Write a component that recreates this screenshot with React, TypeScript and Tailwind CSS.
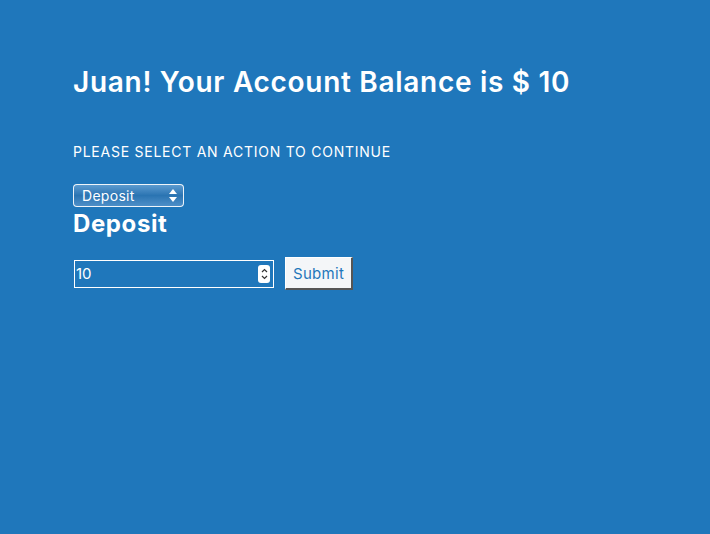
const App = () => {
  return (
    <div
      className="w-[710px] h-[534px] bg-[#1f77bb] text-white px-[73px] pt-[64px]"
      style={{ fontFamily: "Inter, 'Noto Sans', sans-serif" }}
    >
      {/* ----title---- */}
      <h1 className="text-[28px] leading-[36px] font-semibold tracking-[0.7px]">
        Juan! Your Account Balance is $ 10
      </h1>
      <p className="mt-[42px] text-[14px] leading-[20px] uppercase tracking-[0.75px]">
        Please select an action to continue
      </p>

      {/* ----select---- */}
      <div className="mt-[22px] w-[111px] h-[23px] rounded-[4px] border border-white/90 bg-gradient-to-b from-[#5b9bd0] via-[#2a74b2] to-[#4d8fc8] flex items-center justify-between pl-[8px] pr-[6px] text-[14px] leading-none tracking-[0.3px]">
        <span>Deposit</span>
        <svg width="8" height="13" viewBox="0 0 8 13" fill="white">
          <path d="M4 0 L8 5 L0 5 Z" />
          <path d="M0 8 L8 8 L4 13 Z" />
        </svg>
      </div>
      <h2 className="text-[24px] leading-[30px] font-bold mt-[2px] tracking-[0.6px]">Deposit</h2>

      {/* ----form---- */}
      <div className="mt-[18px] flex items-center gap-[11px]">
        <div className="w-[200px] h-[28px] border border-white flex items-center justify-between pl-[1px] pr-[3px] ml-[1px]">
          <span className="text-[15px] leading-none">10</span>
          <div className="w-[12px] h-[18px] bg-white rounded-[3px] flex flex-col items-center justify-center gap-[2px]">
            <svg width="7" height="5" viewBox="0 0 7 5" fill="none" stroke="#333" strokeWidth="1.2">
              <path d="M1 4 L3.5 1.5 L6 4" />
            </svg>
            <svg width="7" height="5" viewBox="0 0 7 5" fill="none" stroke="#333" strokeWidth="1.2">
              <path d="M1 1 L3.5 3.5 L6 1" />
            </svg>
          </div>
        </div>
        <button className="h-[33px] px-[7px] bg-[#f4f6f8] text-[#1f77bb] text-[15px] leading-none tracking-[0.3px] border-r-[2px] border-b-[2px] border-[#555] border-t border-l border-t-white border-l-white">
          Submit
        </button>
      </div>
    </div>
  );
};

export default App;
